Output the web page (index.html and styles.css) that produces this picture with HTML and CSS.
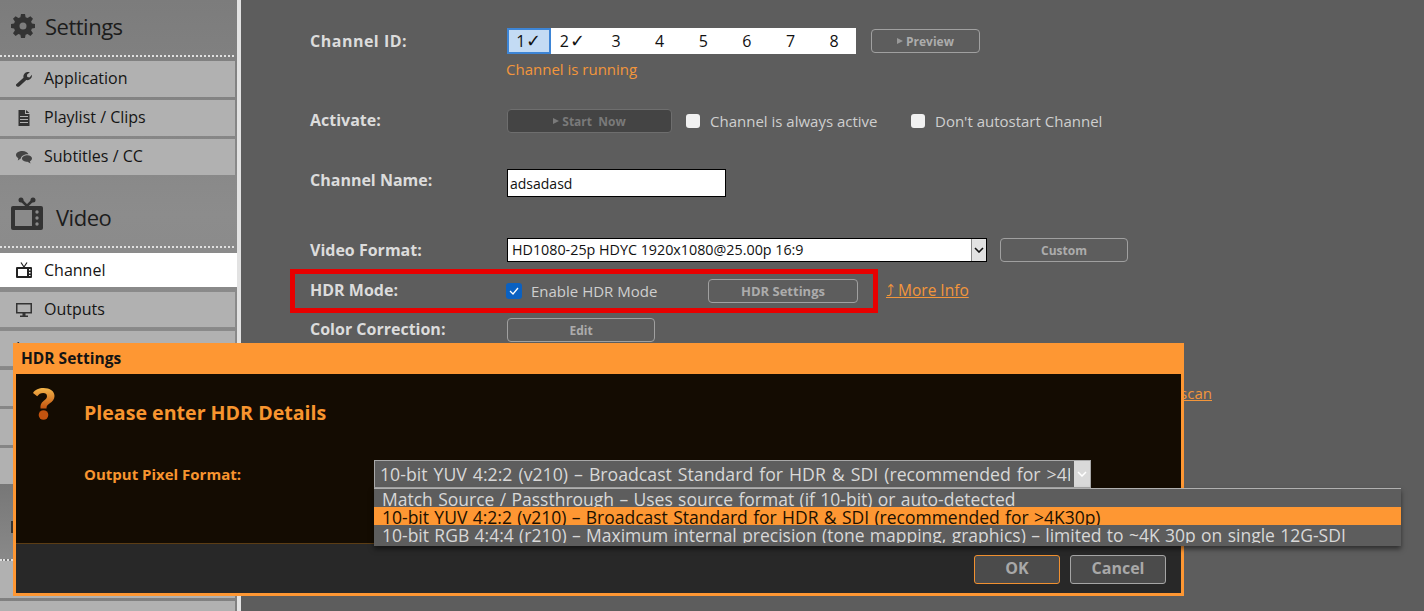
FILE: index.html
```html
<!DOCTYPE html>
<html lang="en">
<head>
	<meta charset="UTF-8">
	<title>Channel Settings</title>
	<link rel="stylesheet" href="styles.css">
</head>
<body>

	<div class="app">
		<div class="sidebar">
			<div class="side-head head-settings">
				<svg class="head-icon" width="24" height="24" viewBox="0 0 24 24"><path fill="#333" fill-rule="evenodd" d="M10 0h4l.6 3.300 2 .8L19.400 2.200 22 4.800l-1.900 2.800.8 2 3.100.5v3.800l-3.100.6-.8 2L22 19.200 19.400 22l-2.800-2-2 .8L14 24h-4l-.6-3.200-2-.8L4.600 22 2 19.200l1.900-2.700-.8-2L0 13.900v-3.800l3.100-.5.8-2L2 4.800 4.600 2.200l2.800 1.900 2-.8zM12 8.500a3.500 3.500 0 1 0 0 7 3.500 3.500 0 0 0 0-7z"/></svg>
				<span>Settings</span>
			</div>
			<a class="side-item"><svg width="16" height="16" viewBox="0 0 16 16"><path fill="#333" d="M0 13.500 7.500 6.800C6.900 4 8.800.9 12.200 1c.6 0 1.100.1 1.600.3L10.900 3.800l.4 2.200 2.200.5L16 3.800c.3 3.300-2.300 6.100-5.700 5.300L3.200 15.600c-1.300.9-3.900-.9-3.200-2.100z"/></svg><span>Application</span></a>
			<a class="side-item"><svg width="16" height="16" viewBox="0 0 16 16"><path fill="#333" d="M2.500 0H9v4h4.500v12h-11zM10 0l3.500 3H10zM4 6v1h8V6zm0 3v1h8V9zm0 3v1h8v-1z" fill-rule="evenodd"/></svg><span>Playlist / Clips</span></a>
			<a class="side-item"><svg width="16" height="16" viewBox="0 0 16 16"><path fill="#444" d="M6.500 2C3 2 0 3.600 0 6c0 1.400 1 2.500 2.300 3.200L1.800 11.500l3-1.900C5.300 7 8 5.300 11.800 5.300c.3 0 .5 0 .7 0C11.700 3.300 9.300 2 6.500 2z"/><path fill="#444" d="M11.500 6.200C8.500 6.200 6 7.600 6 9.500s2.500 3.300 5.500 3.300l3 1.800-.6-2.400C15.200 11.500 16 10.600 16 9.500c0-1.900-1.900-3.300-4.500-3.300z"/></svg><span>Subtitles / CC</span></a>

			<div class="side-head head-video">
				<svg class="head-icon" width="32" height="33" viewBox="0 0 32 33"><path fill="#333" d="M2 9h28a2 2 0 0 1 2 2v20a2 2 0 0 1-2 2H2a2 2 0 0 1-2-2V11a2 2 0 0 1 2-2z"/><path fill="#8a8a8a" d="M4 13h17v16H4z"/><circle cx="26" cy="15" r="1.700" fill="#8a8a8a"/><circle cx="26" cy="21" r="1.700" fill="#8a8a8a"/><circle cx="26" cy="27" r="1.700" fill="#8a8a8a"/><path fill="none" stroke="#333" stroke-width="2.500" d="M10 3l6 6 6-6"/><circle cx="10" cy="3" r="2.500" fill="#333"/><circle cx="22" cy="3" r="2.500" fill="#333"/></svg>
				<span>Video</span>
			</div>
			<a class="side-item active"><svg width="16" height="16" viewBox="0 0 16 16"><path fill="#222" d="M1 5h14a1 1 0 0 1 1 1v9a1 1 0 0 1-1 1H1a1 1 0 0 1-1-1V6a1 1 0 0 1 1-1z"/><path fill="#fff" d="M2 7h9v7H2z"/><path fill="#fff" d="M13 7h1.500v1.500H13zm0 3h1.500v1.500H13zm0 3h1.500v1H13z"/><path fill="none" stroke="#222" stroke-width="1.200" d="M5 .5 8 5l3-4.500"/></svg><span>Channel</span></a>
			<a class="side-item boxed"><svg width="16" height="14" viewBox="0 0 16 14"><path fill="#333" fill-rule="evenodd" d="M0 0h16v10.500H0zM1.500 1.500V9h13V1.500zM6.500 10.500h3V12.500h2.500V14H4v-1.500h2.500z"/></svg><span>Outputs</span></a>
			<a class="side-item boxed"><span>Inputs</span></a>
			<a class="side-item"></a>
			<a class="side-item"></a>
			<a class="side-item"></a>
			<div class="side-head head-dark"><i class="dark-stub"></i></div>
			<a class="side-item side-item-flush"></a>
			<a class="side-item"></a>
		</div>

		<div class="main">
			<div class="row row-channel">
				<label class="row-label">Channel ID:</label>
				<div>
					<div class="row-line">
						<div class="tabs">
							<span class="tab selected">1<b class="tick">&#10003;</b></span>
							<span class="tab">2<b class="tick">&#10003;</b></span>
							<span class="tab">3</span>
							<span class="tab">4</span>
							<span class="tab">5</span>
							<span class="tab">6</span>
							<span class="tab">7</span>
							<span class="tab">8</span>
						</div>
						<button class="btn btn-preview"><i class="play"></i>Preview</button>
					</div>
					<p class="running">Channel is running</p>
				</div>
			</div>

			<div class="row row-activate">
				<label class="row-label">Activate:</label>
				<button class="btn btn-start"><i class="play"></i>Start&nbsp; Now</button>
				<span class="check"></span><span class="check-text check-text-first">Channel is always active</span>
				<span class="check"></span><span class="check-text">Don't autostart Channel</span>
			</div>

			<div class="row row-name">
				<label class="row-label">Channel Name:</label>
				<input class="text-input" type="text" value="adsadasd">
			</div>

			<div class="row row-format">
				<label class="row-label">Video Format:</label>
				<div class="fake-select">
					<span>HD1080-25p HDYC 1920x1080@25.00p 16:9</span>
					<span class="select-arrow"><svg width="10" height="6" viewBox="0 0 10 6"><path fill="none" stroke="#111" stroke-width="1.600" d="M1 1l4 4 4-4"/></svg></span>
				</div>
				<button class="btn btn-custom">Custom</button>
			</div>

			<div class="row row-hdr">
				<div class="hdr-box">
					<label class="row-label hdr-label">HDR Mode:</label>
					<span class="check checked"><svg width="10" height="8" viewBox="0 0 10 8"><path fill="none" stroke="#fff" stroke-width="1.300" d="M1 4l3 3 5-6"/></svg></span>
					<span class="check-text hdr-text">Enable HDR Mode</span>
					<button class="btn btn-hdr">HDR Settings</button>
				</div>
				<a class="link more-info">&#10548; More Info</a>
			</div>

			<div class="row row-color">
				<label class="row-label">Color Correction:</label>
				<button class="btn btn-edit">Edit</button>
			</div>

			<div class="row row-scan">
				<a class="link">Overscan</a>
			</div>
		</div>
	</div>

	<div class="dialog">
		<div class="dialog-title">HDR Settings</div>
		<div class="dialog-body">
			<svg class="question" width="22" height="32" viewBox="0 0 22 32">
				<defs><linearGradient id="qgrad" x1="0" y1="0" x2="0" y2="1"><stop offset="0" stop-color="#f4b54a"/><stop offset="1" stop-color="#c2530f"/></linearGradient></defs>
				<path fill="url(#qgrad)" d="M0 5C2 1.500 6 0 10.500 0 17 0 21.500 3 21.500 8c0 3.500-2 5.500-5 7.500-2.500 1.600-3 2.700-3 5H7.500c-.3-3.500.5-5.500 3-7.500 2.300-1.800 3.500-3 3.500-4.800 0-2-1.500-3.200-3.800-3.200-2.500 0-4.500 1.200-6 3.300z"/>
				<circle cx="10.500" cy="27" r="4.800" fill="#c2530f"/>
			</svg>
			<h3 class="dialog-heading">Please enter HDR Details</h3>
			<div class="dialog-field">
				<label class="field-label">Output Pixel Format:</label>
				<div class="pixel-select">
					<span class="pixel-value">10-bit YUV 4:2:2 (v210) – Broadcast Standard for HDR &amp; SDI (recommended for &gt;4K30p)</span>
					<span class="pixel-arrow"><svg width="10" height="6" viewBox="0 0 10 6"><path fill="none" stroke="#fff" stroke-width="1.500" d="M1 1l4 4 4-4"/></svg></span>
				</div>
			</div>
		</div>
		<div class="dialog-footer">
			<button class="dlg-btn dlg-ok">OK</button>
			<button class="dlg-btn">Cancel</button>
		</div>
	</div>

	<div class="dropdown">
		<div class="option">Match Source / Passthrough – Uses source format (if 10-bit) or auto-detected</div>
		<div class="option current">10-bit YUV 4:2:2 (v210) – Broadcast Standard for HDR &amp; SDI (recommended for &gt;4K30p)</div>
		<div class="option">10-bit RGB 4:4:4 (r210) – Maximum internal precision (tone mapping, graphics) – limited to ~4K 30p on single 12G-SDI</div>
	</div>

</body>
</html>
```

FILE: styles.css
```css
* {
	box-sizing: border-box;
}

html, body {
	height: 100%;
}

body {
	margin: 0;
	overflow: hidden;
	font-family: "Open Sans", "Noto Sans", sans-serif;
	font-size: 15px;
	background-color: #5d5d5d;
}

.app {
	display: flex;
	height: 611px;
}

.sidebar {
	width: 241px;
	flex-shrink: 0;
	background: linear-gradient(#7c7c7c, #8c8c8c 35%, #808080);
	border-right: 4px solid #e2e2e2;
	overflow: hidden;
}

.side-head {
	display: flex;
	align-items: center;
	border-bottom: 2px dotted #e0e0e0;
	margin-right: 3px;
	color: #1c1c1c;
	font-size: 22px;
	letter-spacing: -0.5px;
}

.head-settings {
	height: 57px;
	padding: 0 0 4px 11px;
	gap: 10px;
}

.head-video {
	height: 73px;
	padding: 6px 0 0 11px;
	gap: 13px;
}

.head-video span {
	padding-top: 6px;
}

.head-dark {
	position: relative;
	width: 237px;
	height: 77px;
	margin-right: 0;
	background: linear-gradient(#777, #898989);
}

.dark-stub {
	position: absolute;
	left: 11px;
	top: 37px;
	width: 3px;
	height: 12px;
	background-color: #333;
}

.side-item {
	display: flex;
	align-items: center;
	height: 36px;
	width: 235px;
	margin-top: 3px;
	padding-left: 16px;
	background-color: #b1b1b1;
	color: #151515;
	font-size: 16px;
	gap: 12px;
}

.side-item span {
	padding-bottom: 3px;
}

.side-item-flush {
	margin-top: 0;
	height: 37px;
}

.head-settings + .side-item {
	margin-top: 4px;
}

.side-item.active {
	width: 237px;
	height: 34px;
	margin-top: 5px;
	background-color: #fff;
}

.side-item.active span {
	padding-bottom: 1px;
}

.side-item.boxed {
	width: 236px;
	height: 37px;
	margin-top: 4px;
	border: 1px solid #8a8a8a;
	border-left: 0;
}

.side-item.boxed + .side-item.boxed {
	margin-top: 2px;
}

.side-item.boxed span {
	padding-bottom: 1px;
}

.main {
	flex: 1;
	padding-left: 69px;
	background-color: #5d5d5d;
	color: #ddd;
}

.row {
	display: flex;
	align-items: center;
}

.row-label {
	width: 197px;
	flex-shrink: 0;
	font-size: 16px;
	font-weight: 700;
	color: #dcdcdc;
}

.row-channel {
	align-items: flex-start;
	padding-top: 28px;
	height: 109px;
}

.row-channel .row-label {
	line-height: 26px;
	letter-spacing: 0.5px;
}

.row-line {
	display: flex;
	align-items: center;
	gap: 15px;
}

.tabs {
	display: flex;
	width: 349px;
	height: 26px;
	background-color: #fff;
}

.tab {
	width: 12.5%;
	color: #111;
	font-size: 16px;
	line-height: 26px;
	text-align: center;
}

.tab.selected {
	background-color: #c3dbf4;
	border: 2px solid #3d85d6;
	line-height: 22px;
}

.tick {
	margin-left: 1px;
	font-size: 18px;
	font-weight: 400;
	line-height: 20px;
}

.running {
	margin: 5px 0 0 -1px;
	color: #f3963b;
	font-size: 15px;
	line-height: 20px;
}

.btn {
	display: inline-flex;
	align-items: center;
	justify-content: center;
	height: 24px;
	padding: 0;
	background: transparent;
	border: 1px solid #a0a0a0;
	border-radius: 4px;
	color: #acacac;
	font-family: inherit;
	font-size: 12px;
	font-weight: 700;
}

.play {
	width: 0;
	height: 0;
	margin-right: 3px;
	border-left: 6px solid #999;
	border-top: 3px solid transparent;
	border-bottom: 3px solid transparent;
}

.btn-preview {
	width: 109px;
}

.row-activate {
	height: 24px;
}

.row-activate .row-label {
	padding-bottom: 3px;
}

.btn-start {
	width: 165px;
	background-color: #444;
	border-color: #6e6e6e;
	color: #7a7a7a;
	margin-right: 14px;
}

.btn-start .play {
	border-left-color: #7a7a7a;
}

.check {
	display: inline-flex;
	align-items: center;
	justify-content: center;
	width: 14px;
	height: 14px;
	margin-right: 10px;
	flex-shrink: 0;
	background-color: #f1f1f1;
	border-radius: 3px;
}

.check.checked {
	width: 16px;
	height: 16px;
	margin-left: -1px;
	margin-right: 9px;
	background-color: #0a61c2;
}

.check-text {
	color: #cfcfcf;
	font-size: 15px;
}

.check-text-first {
	width: 201px;
}

.row-name {
	height: 28px;
	margin-top: 36px;
}

.row-name .row-label {
	padding-bottom: 6px;
}

.text-input {
	width: 219px;
	height: 28px;
	padding: 0 2px;
	background-color: #fff;
	border: 1px solid #000;
	color: #111;
	font-family: inherit;
	font-size: 14px;
}

.row-format {
	height: 24px;
	margin-top: 41px;
}

.row-format .row-label {
	padding-bottom: 1px;
}

.fake-select {
	display: flex;
	justify-content: space-between;
	width: 480px;
	height: 24px;
	margin-right: 13px;
	padding-left: 4px;
	background-color: #fff;
	border: 1px solid #000;
	color: #111;
	font-size: 14.300px;
	line-height: 22px;
}

.select-arrow {
	display: flex;
	align-items: center;
	justify-content: center;
	width: 15px;
	background-color: #e2e2e2;
	border-left: 1px solid #888;
}

.btn-custom {
	width: 128px;
}

.row-hdr {
	height: 44px;
	margin-top: 7px;
	margin-left: -20px;
}

.hdr-box {
	display: flex;
	align-items: center;
	width: 588px;
	height: 44px;
	padding-left: 15px;
	border: 5px solid #e80000;
}

.hdr-label {
	padding-bottom: 2px;
}

.hdr-text {
	width: 177px;
}

.btn-hdr {
	width: 150px;
	height: 24px;
	font-size: 13px;
}

.link {
	color: #f3963b;
	font-size: 15px;
	text-decoration: underline;
}

.more-info {
	margin-left: 8px;
	padding-bottom: 2px;
	font-size: 15.500px;
}

.row-color {
	height: 24px;
	margin-top: 5px;
}

.row-color .row-label {
	padding-bottom: 2px;
}

.btn-edit {
	width: 148px;
}

.row-scan {
	justify-content: flex-end;
	width: 902px;
	height: 22px;
	margin-top: 40px;
}

/* dialogo sopra la pagina */
.dialog {
	position: absolute;
	left: 13px;
	top: 343px;
	display: flex;
	flex-direction: column;
	width: 1171px;
	height: 253px;
	border: 3px solid #fe9733;
	border-top: 0;
}

.dialog-title {
	height: 31px;
	padding-left: 5px;
	background-color: #fe9733;
	color: #141414;
	font-size: 15.500px;
	font-weight: 700;
	line-height: 31px;
}

.dialog-body {
	position: relative;
	height: 170px;
	padding: 24px 0 0 68px;
	background-color: #140c02;
	border-bottom: 1px solid #5c3d14;
}

.question {
	position: absolute;
	left: 17px;
	top: 14px;
}

.dialog-heading {
	margin: 0;
	color: #f8952f;
	font-size: 19.600px;
	font-weight: 700;
	line-height: 30px;
}

.dialog-field {
	display: flex;
	align-items: center;
	margin-top: 32px;
}

.field-label {
	width: 290px;
	flex-shrink: 0;
	color: #f8952f;
	font-size: 15px;
	font-weight: 700;
}

.pixel-select {
	display: flex;
	width: 717px;
	height: 28px;
	background-color: #5d5d5d;
	border: 1px solid #a8a8a8;
	color: #d8d8d8;
	font-size: 17.700px;
	line-height: 26px;
	word-spacing: 1.400px;
}

.pixel-value {
	flex: 1;
	min-width: 0;
	margin-right: 4px;
	padding-left: 5px;
	overflow: hidden;
	white-space: nowrap;
}

.pixel-arrow {
	display: flex;
	align-items: center;
	justify-content: center;
	width: 16px;
	background-color: #d9d9d9;
}

.dialog-footer {
	flex: 1;
	display: flex;
	justify-content: flex-end;
	gap: 10px;
	padding: 11px 15px 0 0;
	background-color: #282828;
}

.dlg-btn {
	width: 96px;
	height: 29px;
	padding: 0 0 3px;
	background-color: #4b4b4b;
	border: 1px solid #a5a5a5;
	border-radius: 3px;
	color: #a8a8a8;
	font-family: inherit;
	font-size: 16px;
	font-weight: 700;
}

.dlg-ok {
	width: 86px;
	border-color: #f09030;
}

.dropdown {
	position: absolute;
	left: 374px;
	top: 488px;
	width: 1027px;
	height: 58px;
	overflow: hidden;
	background-color: #5d5d5d;
	border-top: 1px solid #b0b0b0;
	box-shadow: 0 3px 5px rgba(0, 0, 0, 0.5);
	color: #d8d8d8;
	font-size: 17.500px;
	word-spacing: 0.800px;
}

.option {
	height: 18px;
	padding-left: 8px;
	line-height: 20px;
	white-space: nowrap;
	overflow: hidden;
}

.option.current {
	background-color: #fe9733;
	color: #201000;
}
```
